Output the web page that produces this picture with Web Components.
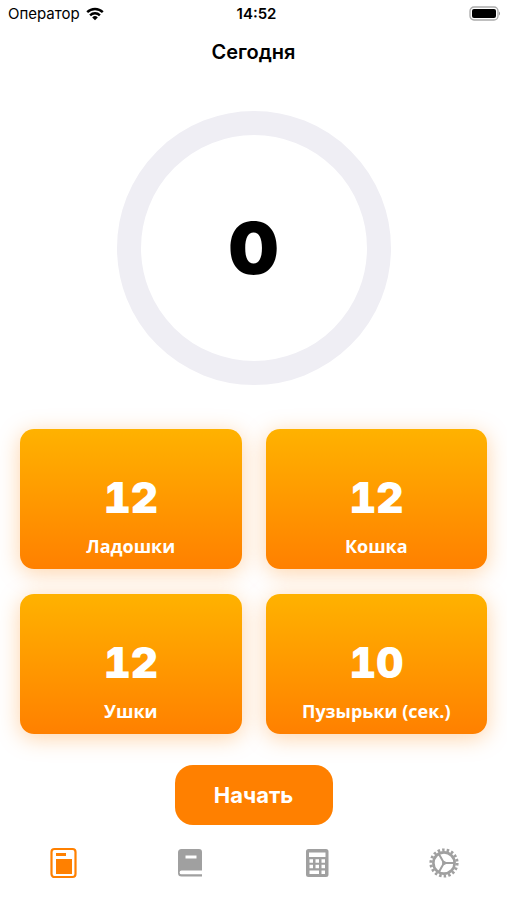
<!DOCTYPE html>
<html lang="ru">
<head>
<meta charset="utf-8">
<meta name="viewport" content="width=device-width, initial-scale=1">
<title>Сегодня</title>
<style>
	body {
		margin: 0;
		background: #fff;
		color: #000;
		font-family: Inter, "Liberation Sans", sans-serif;
	}
</style>
</head>
<body>
<today-page></today-page>

<script>
const Icons = {
	today: `
		<rect x="3.500" y="2" width="24" height="28" rx="3" fill="none" stroke="currentColor" stroke-width="2.200"/>
		<rect x="8" y="6" width="10" height="3" fill="currentColor"/>
		<rect x="8" y="12" width="16" height="15" fill="currentColor"/>`,
	book: `
		<path fill="currentColor" fill-rule="evenodd" d="M6.500 2H24a3 3 0 0 1 3 3V23.500H6.500a1.800 1.800 0 0 0 0 3.800H27V29.500H6.500A3.500 3.500 0 0 1 3 26V5.500A3.500 3.500 0 0 1 6.500 2ZM10.500 8.500V11.500H21.500V8.500Z"/>`,
	calculator: `
		<path fill="currentColor" fill-rule="evenodd" d="M6.500 2H24a2.500 2.500 0 0 1 2.500 2.500V27.500a2.500 2.500 0 0 1-2.500 2.500H6.500A2.500 2.500 0 0 1 4 27.500V4.500A2.500 2.500 0 0 1 6.500 2Z
			M7 5.500V10H23.500V5.500Z
			M7.500 12.200V15.800H11V12.200Z M13.500 12.200V15.800H17V12.200Z M19.500 12.200V15.800H23V12.200Z
			M7.500 17.700V21.300H11V17.700Z M13.500 17.700V21.300H17V17.700Z M19.500 17.700V21.300H23V17.700Z
			M7.500 23.500V27H17V23.500Z M19.500 23.500V27H23V23.500Z"/>`,
	settings: `
		<g fill="none" stroke="currentColor">
			<circle cx="15" cy="16" r="10.600" stroke-width="2.600"/>
			<circle cx="15" cy="16" r="13.100" stroke-width="3" stroke-dasharray="2.500 2.073"/>
			<path stroke-width="2" d="M15 16H25M15 16L10 7.300M15 16L10 24.700"/>
		</g>
		<circle cx="15" cy="16" r="2" fill="currentColor"/>`
};

class StatusBar extends HTMLElement {

	constructor(){
		super();
		this.attachShadow({mode: "open"});
	}

	connectedCallback(){
		this.shadowRoot.innerHTML = `
			<style>
				:host {
					display: grid;
					grid-template-columns: 1fr auto 1fr;
					align-items: center;
					height: 28px;
					padding: 0 6px 0 8px;
					font-size: 15px;
					line-height: 20px;
				}
				.carrier {
					display: flex;
					align-items: center;
					gap: 6px;
				}
				time {
					padding-left: 4px;
					font-weight: 600;
				}
				.battery {
					justify-self: end;
				}
				svg {
					display: block;
				}
			</style>
			<div class="carrier">
				<span>${this.getAttribute("data-carrier")}</span>
				<svg width="18" height="14" viewBox="0 0 18 14" aria-hidden="true">
					<g fill="none" stroke="#000" stroke-width="2.400">
						<path d="M1.200 5.200a11 11 0 0 1 15.600 0"/>
						<path d="M4.100 8.300a7 7 0 0 1 9.800 0"/>
					</g>
					<path d="M9 13.200L6.200 10.400a4 4 0 0 1 5.600 0Z"/>
				</svg>
			</div>
			<time>${this.getAttribute("data-time")}</time>
			<svg class="battery" width="32" height="16" viewBox="0 0 32 16" aria-hidden="true">
				<rect x="1" y="1" width="28" height="13" rx="4" fill="none" stroke="#aaa" stroke-width="1.300"/>
				<rect x="3" y="3" width="24" height="9" rx="2"/>
				<path d="M30 5.500a2.500 2.500 0 0 1 0 4Z" fill="#999"/>
			</svg>
		`;
	}

}

class ProgressRing extends HTMLElement {

	constructor(){
		super();
		this.attachShadow({mode: "open"});
	}

	connectedCallback(){
		this.shadowRoot.innerHTML = `
			<style>
				:host {
					display: flex;
					align-items: center;
					justify-content: center;
					box-sizing: border-box;
					width: 274px;
					height: 274px;
					border: 24px solid #efeef4;
					border-radius: 50%;
					font-size: 72px;
					line-height: 100px;
					font-weight: 900;
				}
			</style>
			<slot></slot>
		`;
	}

}

class ExerciseCard extends HTMLElement {

	constructor(){
		super();
		this.attachShadow({mode: "open"});
	}

	connectedCallback(){
		this.shadowRoot.innerHTML = `
			<style>
				:host {
					display: flex;
					flex-direction: column;
					align-items: center;
					justify-content: flex-end;
					box-sizing: border-box;
					height: 140px;
					padding-bottom: 11px;
					border-radius: 14px;
					background: linear-gradient(#ffb200, #ff8000);
					box-shadow: 0 4px 22px rgba(255, 128, 0, .34);
					color: #fff;
					text-align: center;
				}
				.count {
					font-size: 42px;
					line-height: 52px;
					font-weight: 900;
					font-variant-numeric: tabular-nums;
				}
				.name {
					margin-top: 10px;
					font: 700 18px/24px "Open Sans", "Noto Sans", sans-serif;
				}
			</style>
			<div class="count">${this.getAttribute("data-count")}</div>
			<div class="name"><slot></slot></div>
		`;
	}

}

class StartButton extends HTMLElement {

	constructor(){
		super();
		this.attachShadow({mode: "open"});
	}

	connectedCallback(){
		this.shadowRoot.innerHTML = `
			<style>
				:host {
					display: block;
				}
				button {
					display: block;
					min-width: 158px;
					height: 60px;
					padding: 0 32px;
					border: 0;
					border-radius: 18px;
					background: #ff8000;
					color: #fff;
					font: 700 22px/28px Inter, "Liberation Sans", sans-serif;
				}
			</style>
			<button type="button"><slot></slot></button>
		`;
	}

}

class TabBar extends HTMLElement {

	constructor(){
		super();
		this.attachShadow({mode: "open"});
	}

	connectedCallback(){
		const active = this.getAttribute("data-active");
		const tabs = [
			["today", "Сегодня"],
			["book", "Дневник"],
			["calculator", "Калькулятор"],
			["settings", "Настройки"]
		];

		var items = "";
		for(const [name, label] of tabs){
			items = items + `
				<a href="#${name}" aria-label="${label}"${name === active ? ' aria-current="page"' : ""}>
					<svg width="30" height="32" viewBox="0 0 30 32" aria-hidden="true">${Icons[name]}</svg>
				</a>`;
		}

		this.shadowRoot.innerHTML = `
			<style>
				:host {
					display: block;
				}
				nav {
					display: grid;
					grid-template-columns: repeat(4, 1fr);
				}
				a {
					display: flex;
					justify-content: center;
					padding: 8px 0 21px;
					color: #a0a0a0;
				}
				a[aria-current] {
					color: #ff8000;
				}
				svg {
					display: block;
				}
			</style>
			<nav>${items}</nav>
		`;
	}

}

class TodayPage extends HTMLElement {

	constructor(){
		super();
		this.attachShadow({mode: "open"});
	}

	connectedCallback(){
		this.shadowRoot.innerHTML = `
			<style>
				:host {
					display: flex;
					flex-direction: column;
					min-height: 100vh;
				}
				h1 {
					margin: 0;
					padding: 12px 0;
					font-size: 20px;
					line-height: 24px;
					font-weight: 600;
					text-align: center;
				}
				main {
					display: flex;
					flex-direction: column;
					align-items: center;
					padding-top: 35px;
				}
				.cards {
					display: grid;
					grid-template-columns: 1fr 1fr;
					gap: 25px 24px;
					align-self: stretch;
					padding: 44px 20px 31px;
				}
				tab-bar {
					margin-top: auto;
				}
			</style>
			<status-bar data-carrier="Оператор" data-time="14:52"></status-bar>
			<h1>Сегодня</h1>
			<main>
				<progress-ring>0</progress-ring>
				<div class="cards">
					<exercise-card data-count="12">Ладошки</exercise-card>
					<exercise-card data-count="12">Кошка</exercise-card>
					<exercise-card data-count="12">Ушки</exercise-card>
					<exercise-card data-count="10">Пузырьки (сек.)</exercise-card>
				</div>
				<start-button>Начать</start-button>
			</main>
			<tab-bar data-active="today"></tab-bar>
		`;
	}

}

customElements.define('status-bar', StatusBar);
customElements.define('progress-ring', ProgressRing);
customElements.define('exercise-card', ExerciseCard);
customElements.define('start-button', StartButton);
customElements.define('tab-bar', TabBar);
customElements.define('today-page', TodayPage);
</script>
</body>
</html>
